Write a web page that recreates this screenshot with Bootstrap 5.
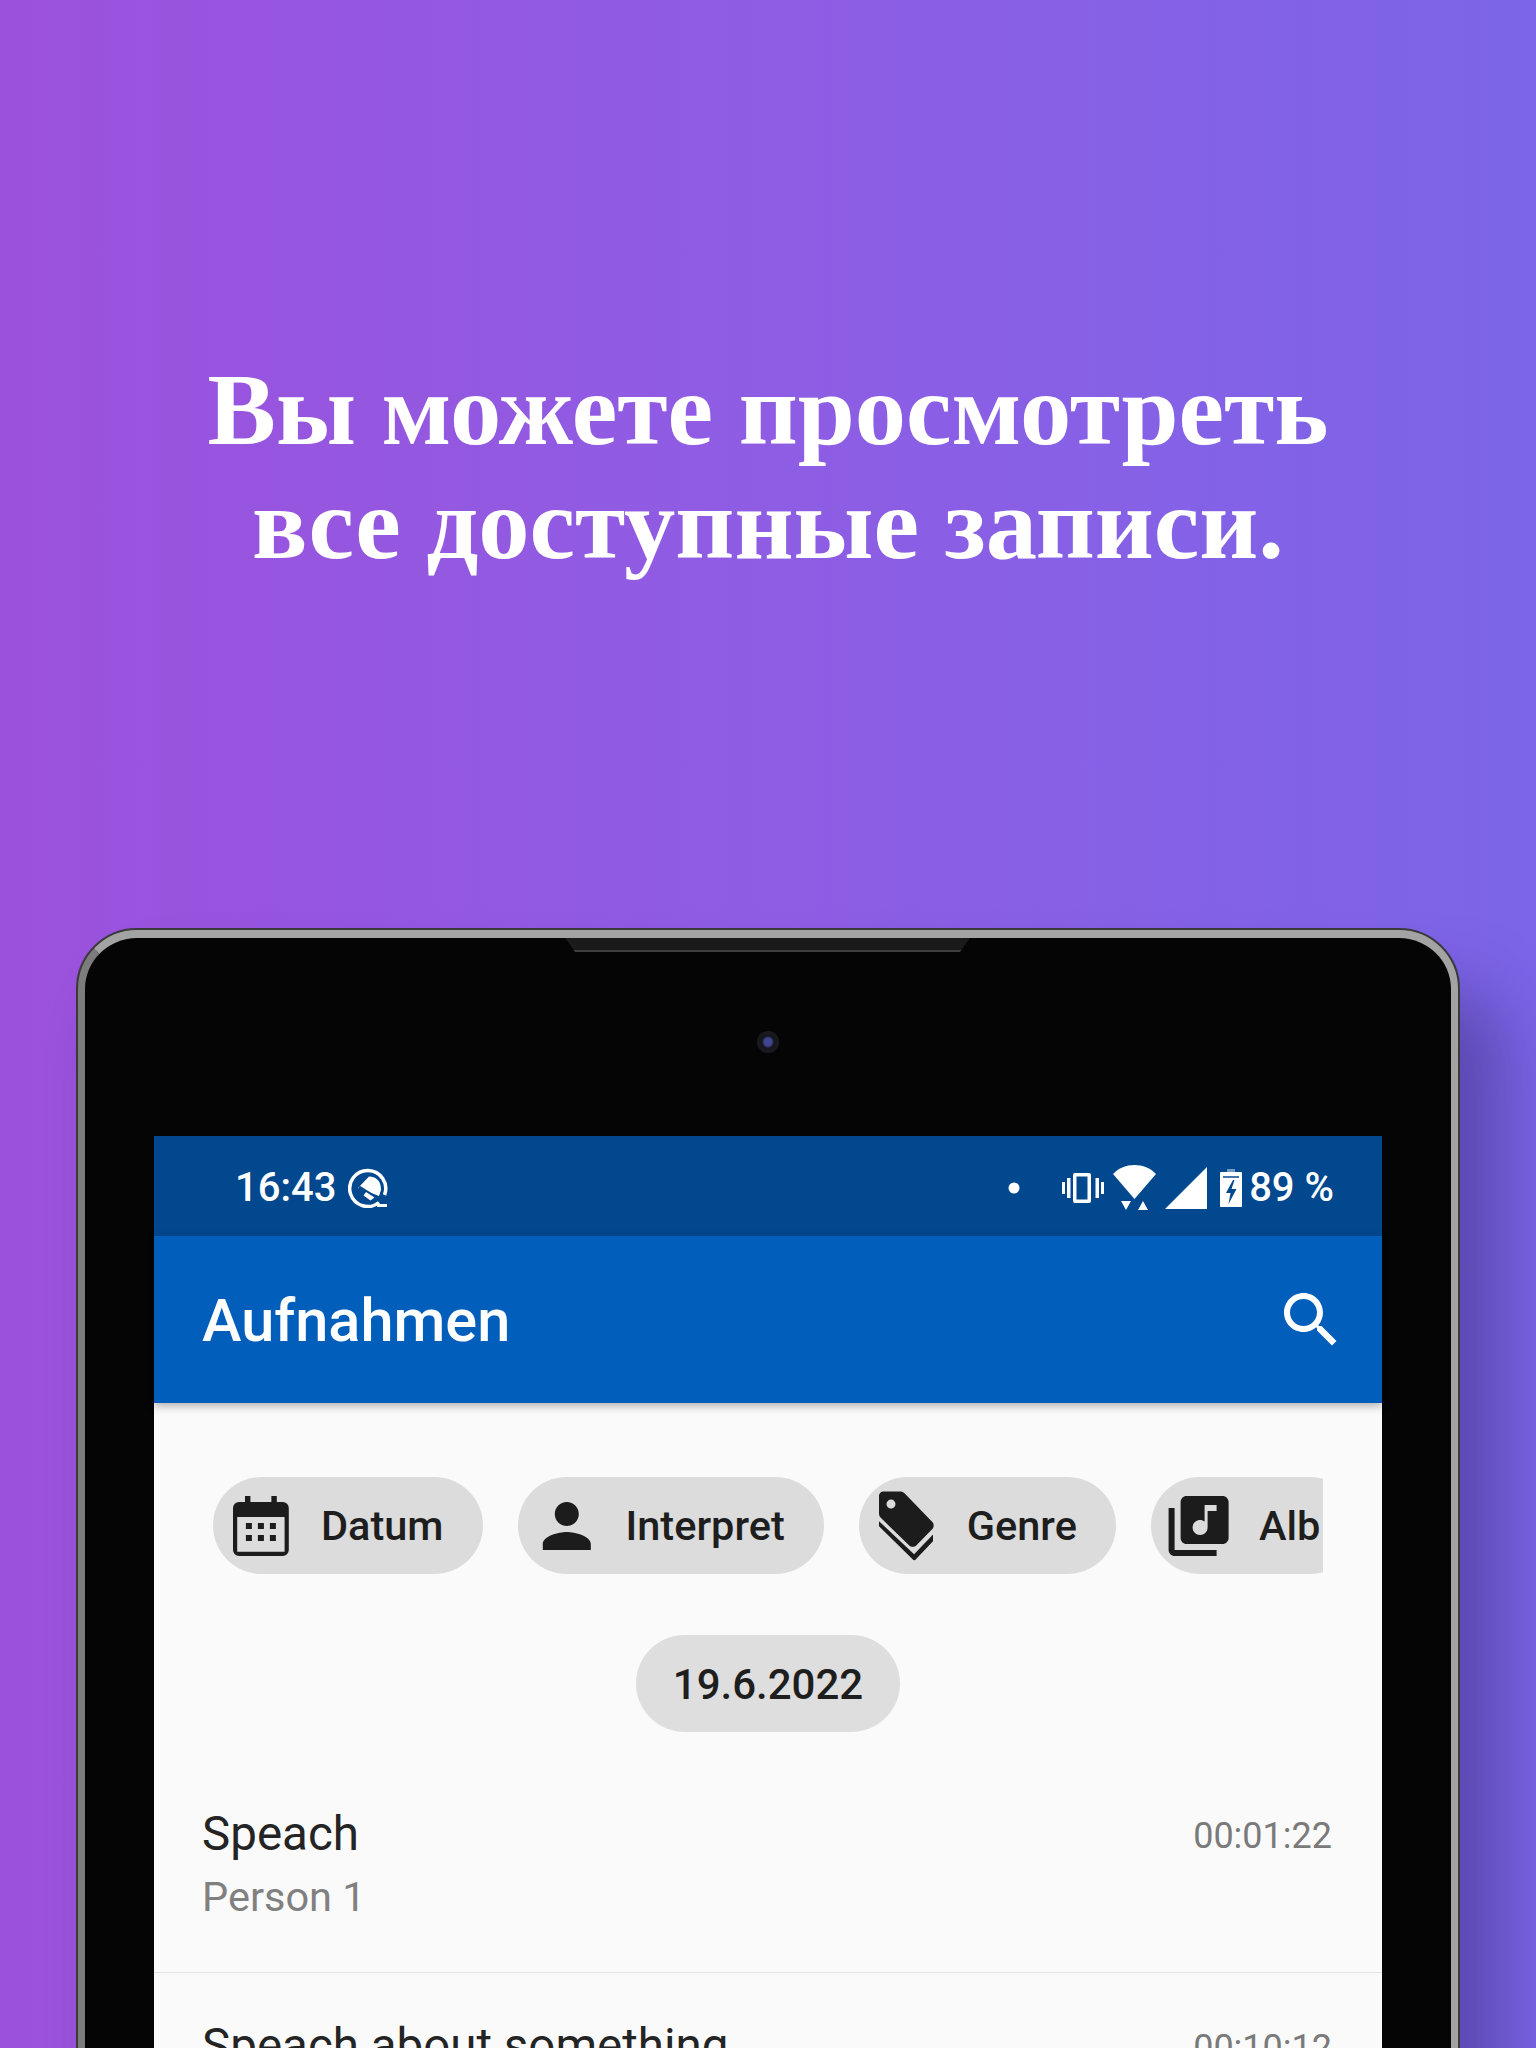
<!DOCTYPE html>
<html lang="ru">
<head>
<meta charset="UTF-8">
<title>Aufnahmen</title>
<link href="https://cdn.jsdelivr.net/npm/bootstrap@5.3.3/dist/css/bootstrap.min.css" rel="stylesheet">
<style>
html, body { margin: 0; height: 2048px; overflow: hidden; }
.promo-page {
    width: 1536px; height: 2048px; overflow: hidden;
    background: linear-gradient(90deg, #9c51dc 0%, #8e5de4 50%, #7c65e8 100%);
    font-family: Roboto, sans-serif;
}
.promo-title {
    height: 929px; padding-top: 353px; margin: 0;
    font-family: "Liberation Serif", "Times New Roman", serif;
    font-weight: 700; font-size: 102.500px; line-height: 114px; color: #fff; text-align: center;
}
.tablet {
    position: relative; width: 1382px; margin-left: 77px; height: 1300px; padding: 198px 69px 0 69px;
    background: #050505; border-radius: 60px 60px 0 0;
    border: 8px solid #a3a3a3; border-top-width: 9px; border-left-color: #7c7c7c; border-bottom: 0;
    outline: 2px solid #3a3a3a; outline-offset: -1px;
    box-shadow: 44px 60px 70px rgba(40, 30, 90, .4);
}
.tablet-notch {
    position: absolute; top: 0; left: 480px; width: 405px; height: 14px;
    background: #1a1a1a; border-bottom: 2px solid #404040;
    clip-path: polygon(0 0, 100% 0, 97.500% 100%, 2.500% 100%);
}
.tablet-cam {
    position: absolute; top: 93px; left: 672px; width: 22px; height: 22px; border-radius: 50%;
    background: radial-gradient(circle, #3f458f 0 24%, #15151c 40%, #202020 100%);
}
.app-screen { background: #fafafa; height: 1100px; }
.status-strip { height: 100px; background: #01488f; color: #fff; padding: 3px 48px 0 81px; font-size: 40px; font-weight: 500; }
.status-clock { margin-right: 12px; }
.app-head { height: 167px; background: #015eba; box-shadow: 0 3px 8px rgba(0,0,0,.3); padding: 0 35px 0 48px; color: #fff; }
.app-head .navbar-brand { color: #fff; font-size: 59.500px; font-weight: 500; padding: 4px 0 0 0; margin: 0; }
.chip-strip { margin: 74px 59px 0 59px; overflow: hidden; gap: 35px; }
.chip-pill {
    flex: none; height: 97px; border-radius: 49px; background: #dcdcdc; color: #1e1e1e;
    font-size: 41.500px; font-weight: 500; padding: 0 39px 0 14px;
}
.chip-pill svg { flex: none; width: 72px; height: 72px; margin-right: 22px; fill: #1c1c1c; }
.chip-pill span { margin-top: 2px; }
.date-pill {
    height: 97px; width: 264px; border-radius: 49px; background: #dedede; color: #1e1e1e;
    font-size: 42px; font-weight: 500; margin: 61px auto 0 auto; padding-top: 2px;
}
.rec-list { margin-top: 29px; background: transparent; }
.rec-row { background: transparent; padding: 42px 50px 0 48px; height: 212px; border-color: #e4e4e4; }
.rec-name { font-size: 47.500px; line-height: 62px; color: #242424; }
.rec-who { font-size: 41.500px; line-height: 62px; color: #808080; margin-top: 1px; }
.rec-time { font-size: 36px; line-height: 62px; color: #7a7a7a; padding-top: 2px; }
.status-icons svg { display: block; fill: #fff; }
.stat-vib { margin-left: 42px; }
.stat-wifi, .stat-signal { margin-left: 9px; }
.stat-batt { margin-left: 13px; }
.batt-text { margin-left: 7px; }
</style>
</head>
<body>
<div class="promo-page">
    <h1 class="promo-title">Вы можете просмотреть<br>все доступные записи.</h1>

    <div class="tablet">
        <div class="tablet-notch"></div>
        <div class="tablet-cam"></div>

        <div class="app-screen">
            <div class="status-strip d-flex align-items-center justify-content-between">
                <div class="d-flex align-items-center">
                    <span class="status-clock">16:43</span>
                    <svg width="42" height="40" viewBox="0 0 42 40" fill="none" stroke="#fff">
                        <path d="M31 34.500A18 18 0 1 1 36.500 27" stroke-width="3.500"/>
                        <path d="M29 37.500h10" stroke-width="3"/>
                        <path d="M10 20L21 8.500Q33 9 33 22l-2 6z" fill="#fff" stroke="none"/>
                        <path d="M11 19l24 15" stroke="#01488f" stroke-width="3"/>
                        <path d="M18 24l8.500 5.500-4 3-7-5z" fill="#fff" stroke="none"/>
                    </svg>
                </div>
                <div class="status-icons d-flex align-items-center">
                    <svg width="12" height="12" viewBox="0 0 12 12"><circle cx="6" cy="6" r="5.500"/></svg>
                    <svg class="stat-vib" width="42" height="30" viewBox="0 0 42 30">
                        <path d="M13 0h14a2 2 0 0 1 2 2v26a2 2 0 0 1-2 2H13a2 2 0 0 1-2-2V2a2 2 0 0 1 2-2zm1.500 3.500v23h11v-23z" fill-rule="evenodd"/>
                        <path d="M5 5h3.500v20H5zM0 9h3v12H0zM33.500 5H37v20h-3.500zM39 9h3v12h-3z"/>
                    </svg>
                    <svg class="stat-wifi" width="43" height="45" viewBox="0 0 43 45">
                        <path d="M0 9C11-3 32-3 43 9L21.500 34z"/>
                        <path d="M8 36h10l-5 9zM25 45l5-9 5 9z"/>
                    </svg>
                    <svg class="stat-signal" width="42" height="42" viewBox="0 0 42 42"><path d="M42 0v42H0z"/></svg>
                    <svg class="stat-batt" width="22" height="38" viewBox="0 0 22 38">
                        <path d="M7 0h8v3H7z" opacity=".45"/>
                        <path d="M1 3h20a1 1 0 0 1 1 1v33a1 1 0 0 1-1 1H1a1 1 0 0 1-1-1V4a1 1 0 0 1 1-1zm12 8l-7 13h4.500l-2 11 8-15h-5l3-9z" fill-rule="evenodd"/>
                        <path d="M3 8h16" stroke="#01488f" stroke-width="1.500" fill="none"/>
                    </svg>
                    <span class="batt-text">89 %</span>
                </div>
            </div>

            <nav class="navbar app-head d-flex align-items-center justify-content-between flex-nowrap">
                <span class="navbar-brand">Aufnahmen</span>
                <svg width="72" height="72" viewBox="0 0 24 24" fill="#fff"><path d="M15.500 14h-.79l-.28-.27C15.410 12.590 16 11.110 16 9.500 16 5.910 13.090 3 9.500 3S3 5.910 3 9.500 5.910 16 9.500 16c1.610 0 3.090-.59 4.230-1.570l.27.28v.79l5 4.990L20.490 19l-4.990-5zm-6 0C7.010 14 5 11.990 5 9.500S7.010 5 9.500 5 14 7.010 14 9.500 11.990 14 9.500 14z"/></svg>
            </nav>

            <div class="chip-strip d-flex">
                <div class="chip-pill d-flex align-items-center">
                    <svg viewBox="0 0 24 24"><path fill-rule="evenodd" d="M6 2h1.800v2h7V2h1.800v2h2A2 2 0 0 1 20.600 6v14a2 2 0 0 1-2 2H4a2 2 0 0 1-2-2V6a2 2 0 0 1 2-2h2zM3.400 9v11.600h15.800V9z"/><path d="M6.300 11h2v2h-2zM10.300 11h2v2h-2zM14.300 11h2v2h-2zM6.300 15h2v2h-2zM10.300 15h2v2h-2zM14.300 15h2v2h-2z"/></svg>
                    <span>Datum</span>
                </div>
                <div class="chip-pill d-flex align-items-center">
                    <svg viewBox="0 0 24 24"><path transform="translate(-.4 0)" d="M12 12c2.210 0 4-1.790 4-4s-1.790-4-4-4-4 1.790-4 4 1.790 4 4 4zm0 2c-2.670 0-8 1.340-8 4v2h16v-2c0-2.660-5.330-4-8-4z"/></svg>
                    <span>Interpret</span>
                </div>
                <div class="chip-pill d-flex align-items-center">
                    <svg viewBox="0 0 24 24"><path fill-rule="evenodd" d="M3.500.5H9c.6 0 1.100.2 1.500.6l9.200 9.500c.7.7.7 1.800 0 2.500l-5.200 5.300c-.7.7-1.800.7-2.500 0L2.500 9.200A2 2 0 0 1 2 7.800V2C2 1.200 2.700.5 3.500.5zM6 3.200a1.500 1.500 0 1 0 0 3 1.500 1.500 0 0 0 0-3z"/><path d="M2 11.500l11.200 11c.4.400.8.400 1.100 0l5.700-6v-2.300l-6.300 6.600L2 9.800z" transform="translate(0 .6)"/></svg>
                    <span>Genre</span>
                </div>
                <div class="chip-pill d-flex align-items-center">
                    <svg viewBox="0 0 24 24"><path transform="translate(-.8 0)" d="M20 2H8c-1.100 0-2 .9-2 2v12c0 1.100.9 2 2 2h12c1.100 0 2-.9 2-2V4c0-1.100-.9-2-2-2zm-2 5h-3v5.500c0 1.380-1.120 2.500-2.500 2.500S10 13.880 10 12.500s1.120-2.500 2.500-2.500c.57 0 1.080.19 1.500.51V5h4v2zM4 6H2v14c0 1.100.9 2 2 2h14v-2H4V6z"/></svg>
                    <span>Alb</span>
                </div>
            </div>

            <div class="date-pill d-flex align-items-center justify-content-center">19.6.2022</div>

            <div class="list-group list-group-flush rec-list">
                <div class="list-group-item rec-row d-flex justify-content-between">
                    <div>
                        <div class="rec-name">Speach</div>
                        <div class="rec-who">Person 1</div>
                    </div>
                    <div class="rec-time">00:01:22</div>
                </div>
                <div class="list-group-item rec-row d-flex justify-content-between">
                    <div>
                        <div class="rec-name">Speach about something</div>
                    </div>
                    <div class="rec-time">00:10:12</div>
                </div>
            </div>
        </div>
    </div>
</div>
<script src="https://cdn.jsdelivr.net/npm/bootstrap@5.3.3/dist/js/bootstrap.bundle.min.js"></script>
</body>
</html>
